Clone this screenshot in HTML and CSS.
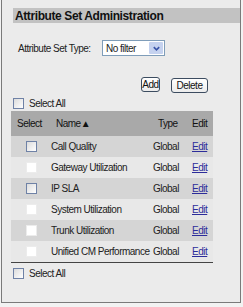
FILE: index.html
```html
<!DOCTYPE html>
<html lang="en">
<head>
    <meta charset="UTF-8">
    <title>Attribute Set Administration</title>
    <link rel="stylesheet" href="styles.css">
</head>
<body>
    <div class="panel">
        <h1 class="title">Attribute Set Administration</h1>
        <div class="filter">
            <span class="filter-label">Attribute Set Type:</span>
            <div class="select">
                <span class="select-value">No filter</span>
                <span class="select-arrow">
                    <svg viewBox="0 0 10 10" width="9" height="9">
                        <path d="M2 3.5 L5 6.5 L8 3.5" fill="none" stroke="#3a55a8" stroke-width="1.8"/>
                    </svg>
                </span>
            </div>
        </div>
        <div class="actions">
            <button class="btn btn-add">Add</button>
            <button class="btn btn-delete">Delete</button>
        </div>
        <label class="select-all top"><input type="checkbox" class="chk"> Select All</label>
        <table class="grid">
            <colgroup>
                <col class="w-sel">
                <col class="w-name">
                <col class="w-type">
                <col class="w-edit">
            </colgroup>
            <thead>
                <tr>
                    <th class="c-sel">Select</th>
                    <th class="c-name">Name&#9650;</th>
                    <th class="c-type">Type</th>
                    <th class="c-edit">Edit</th>
                </tr>
            </thead>
            <tbody>
                <tr class="odd"><td class="c-sel"><input type="checkbox" class="chk"></td><td class="c-name">Call Quality</td><td class="c-type">Global</td><td class="c-edit"><a href="#">Edit</a></td></tr>
                <tr><td class="c-sel"><input type="checkbox" class="chk light"></td><td class="c-name">Gateway Utilization</td><td class="c-type">Global</td><td class="c-edit"><a href="#">Edit</a></td></tr>
                <tr class="odd"><td class="c-sel"><input type="checkbox" class="chk"></td><td class="c-name">IP SLA</td><td class="c-type">Global</td><td class="c-edit"><a href="#">Edit</a></td></tr>
                <tr><td class="c-sel"><input type="checkbox" class="chk light"></td><td class="c-name">System Utilization</td><td class="c-type">Global</td><td class="c-edit"><a href="#">Edit</a></td></tr>
                <tr class="odd"><td class="c-sel"><input type="checkbox" class="chk light"></td><td class="c-name">Trunk Utilization</td><td class="c-type">Global</td><td class="c-edit"><a href="#">Edit</a></td></tr>
                <tr><td class="c-sel"><input type="checkbox" class="chk light"></td><td class="c-name">Unified CM Performance</td><td class="c-type">Global</td><td class="c-edit"><a href="#">Edit</a></td></tr>
            </tbody>
        </table>
        <label class="select-all bottom"><input type="checkbox" class="chk"> Select All</label>
    </div>
</body>
</html>
```
FILE: styles.css
```css
body {
    margin: 0;
    background: #f2f2f2;
    font-family: 'Liberation Sans', Arial, sans-serif;
    font-size: 10px;
    letter-spacing: -0.5px;
    color: #222;
}
.panel {
    margin-left: 1px;
    width: 238px;
    height: 294px;
    padding-top: 8px;
    background: #ebebeb;
    border: 1px solid #7a7a7a;
    border-top: none;
}
.title {
    margin: 0 0 0 11px;
    height: 15px;
    padding-left: 2px;
    background: #c2c2c2;
    font-size: 12px;
    font-weight: bold;
    letter-spacing: -0.4px;
    line-height: 16px;
    color: #111;
}
.filter {
    display: flex;
    align-items: center;
    margin-top: 17px;
    margin-left: 16px;
    height: 16px;
}
.filter-label {
    flex-shrink: 0;
    width: 84px;
    white-space: nowrap;
}
.select {
    display: flex;
    align-items: center;
    width: 61px;
    height: 14px;
    background: #fff;
    border: 1px solid #7f9db9;
}
.select-value {
    flex: 1;
    padding-left: 3px;
}
.select-arrow {
    display: flex;
    align-items: center;
    justify-content: center;
    width: 14px;
    height: 12px;
    margin-right: 1px;
    background: #c5d2ef;
    border-radius: 1px;
}
.actions {
    display: flex;
    align-items: flex-start;
    margin-top: 21px;
    margin-left: 139px;
    height: 17px;
}
.btn {
    font-family: inherit;
    font-size: 10px;
    letter-spacing: -0.5px;
    color: #111;
    background: linear-gradient(#ffffff, #ececec);
    border: 1px solid #3c4c60;
    border-radius: 3px;
    padding: 0;
    height: 15px;
    line-height: 12px;
}
.btn-add {
    width: 19px;
}
.btn-delete {
    margin-left: 11px;
    margin-top: 1px;
    width: 37px;
}
.select-all {
    display: flex;
    align-items: center;
    margin-left: 11px;
    height: 13px;
}
.select-all .chk {
    margin-right: 5px;
}
.select-all.top {
    margin-top: 3px;
}
.select-all.bottom {
    margin-top: 4px;
}
.chk {
    appearance: none;
    -webkit-appearance: none;
    width: 11px;
    height: 11px;
    margin: 0;
    background: linear-gradient(135deg, #dcdcdc, #ffffff);
    border: 1px solid #6f82a6;
    vertical-align: middle;
}
.chk.light {
    background: #fff;
    border-color: #ececec;
}
.grid {
    margin-top: 1px;
    margin-left: 9px;
    width: 202px;
    border-collapse: collapse;
    table-layout: fixed;
    border-bottom: 1px solid #444;
}
.w-sel {
    width: 38px;
}
.w-name {
    width: 102px;
}
.w-type {
    width: 37px;
}
.w-edit {
    width: 25px;
}
.grid th,
.grid td {
    padding: 0;
    text-align: left;
    font-weight: normal;
    white-space: nowrap;
}
.grid th {
    height: 25px;
    background: #a9a9a9;
    color: #111;
}
.grid td {
    height: 21px;
    background: #e8e8e8;
}
.grid tr.odd td {
    background: #d5d5d5;
}
.grid td.c-sel {
    padding-left: 15px;
}
.grid th.c-sel {
    padding-left: 6px;
}
.grid .c-name {
    padding-left: 2px;
}
.grid th.c-name {
    padding-left: 7px;
}
.grid .c-type {
    padding-left: 2px;
}
.grid th.c-type {
    padding-left: 7px;
}
.grid .c-edit {
    padding-left: 4px;
}
.grid a {
    color: #2c2c9a;
}
```
